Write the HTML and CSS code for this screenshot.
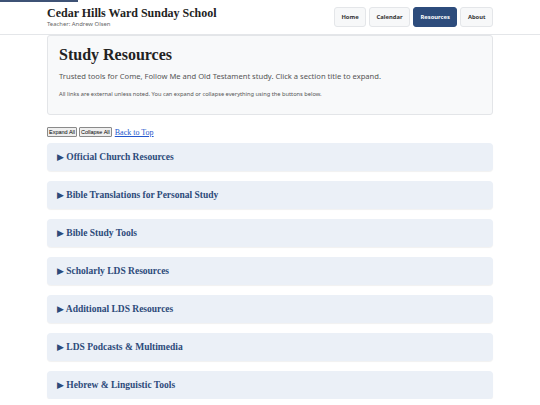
FILE: index.html
```html
<!DOCTYPE html>
<html lang="en">
<head>
<meta charset="utf-8">
<title>Study Resources – Cedar Hills Ward Sunday School</title>
<link rel="stylesheet" href="styles.css">
</head>
<body>
<div class="progress"></div>
<header class="site-header">
  <div class="wrap header-row">
    <div class="brand">
      <div class="brand-title">Cedar Hills Ward Sunday School</div>
      <div class="brand-sub">Teacher: Andrew Olsen</div>
    </div>
    <nav class="nav">
      <a class="nav-btn" href="#">Home</a>
      <a class="nav-btn" href="#">Calendar</a>
      <a class="nav-btn active" href="#">Resources</a>
      <a class="nav-btn" href="#">About</a>
    </nav>
  </div>
</header>
<main class="wrap">
  <section class="intro">
    <h1 class="intro-title">Study Resources</h1>
    <p class="intro-lead">Trusted tools for Come, Follow Me and Old Testament study. Click a section title to expand.</p>
    <p class="intro-note">All links are external unless noted. You can expand or collapse everything using the buttons below.</p>
  </section>
  <div class="controls">
    <button class="ctl">Expand All</button>
    <button class="ctl">Collapse All</button>
    <a class="top-link" href="#">Back to Top</a>
  </div>
  <div class="sections">
    <div class="sec"><span class="tri">&#9654;</span> Official Church Resources</div>
    <div class="sec"><span class="tri">&#9654;</span> Bible Translations for Personal Study</div>
    <div class="sec"><span class="tri">&#9654;</span> Bible Study Tools</div>
    <div class="sec"><span class="tri">&#9654;</span> Scholarly LDS Resources</div>
    <div class="sec"><span class="tri">&#9654;</span> Additional LDS Resources</div>
    <div class="sec"><span class="tri">&#9654;</span> LDS Podcasts &amp; Multimedia</div>
    <div class="sec"><span class="tri">&#9654;</span> Hebrew &amp; Linguistic Tools</div>
  </div>
</main>
</body>
</html>
```

FILE: styles.css
```css
* { box-sizing: border-box; }
html, body { margin: 0; padding: 0; background: #ffffff; }
body { font-family: "Noto Sans", "Open Sans", sans-serif; color: #333; }

.progress {
  position: fixed;
  top: 0; left: 0;
  width: 78px; height: 2px;
  background: #3e5275;
}

.wrap { width: 446px; margin: 0 auto; }

.site-header { border-bottom: 1px solid #e4e6e9; }
.header-row {
  display: flex;
  justify-content: space-between;
  align-items: center;
  padding: 6px 0 6px;
}
.brand-title {
  font-family: Georgia, "Liberation Serif", serif;
  font-weight: bold;
  font-size: 12px;
  line-height: 14px;
  color: #222;
}
.brand-sub {
  font-size: 5.9px;
  line-height: 8px;
  color: #666;
  margin-top: 0;
}
.nav { display: flex; gap: 3px; }
.nav-btn {
  font-size: 5.8px;
  font-weight: bold;
  line-height: 8px;
  color: #333;
  text-decoration: none;
  padding: 5px 6.5px;
  background: #f7f8f9;
  border: 1px solid #e4e6e9;
  border-radius: 3px;
}
.nav-btn.active { background: #2d4c7c; border-color: #2d4c7c; color: #fff; }

.intro {
  background: #f8f9fa;
  border: 1px solid #e3e5e8;
  border-radius: 3px;
  padding: 9px 11px 16px;
}
.intro-title {
  font-family: Georgia, "Liberation Serif", serif;
  font-weight: bold;
  font-size: 16px;
  line-height: 20px;
  margin: 0 0 6px;
  color: #222;
}
.intro-lead { font-size: 7.6px; line-height: 11px; color: #555; margin: 0 0 8px; }
.intro-note { font-size: 5.7px; line-height: 8px; color: #555; margin: 0; }

.controls {
  display: flex;
  align-items: center;
  gap: 2px;
  margin: 12px 0 6px;
}
.ctl {
  font-family: "Liberation Sans", Arial, sans-serif;
  font-size: 5.5px;
  line-height: 6px;
  padding: 1px 1px;
  background: #efefef;
  border: 1px solid #8a8a8a;
  border-radius: 1px;
  color: #000;
}
.top-link {
  margin-left: 1px;
  font-family: "Liberation Serif", serif;
  font-size: 8px;
  color: #2255cc;
}

.sections { display: flex; flex-direction: column; gap: 10px; }
.sec {
  height: 28px;
  display: flex;
  align-items: center;
  padding: 0 10px;
  background: #ebf0f7;
  border-radius: 4px;
  box-shadow: 0 1px 1px rgba(0,0,0,0.06);
  font-family: Georgia, "Liberation Serif", serif;
  font-weight: bold;
  font-size: 9.5px;
  color: #2c4a7a;
  white-space: pre;
}
.tri { font-size: 9px; font-family: "DejaVu Sans", sans-serif; }
```
